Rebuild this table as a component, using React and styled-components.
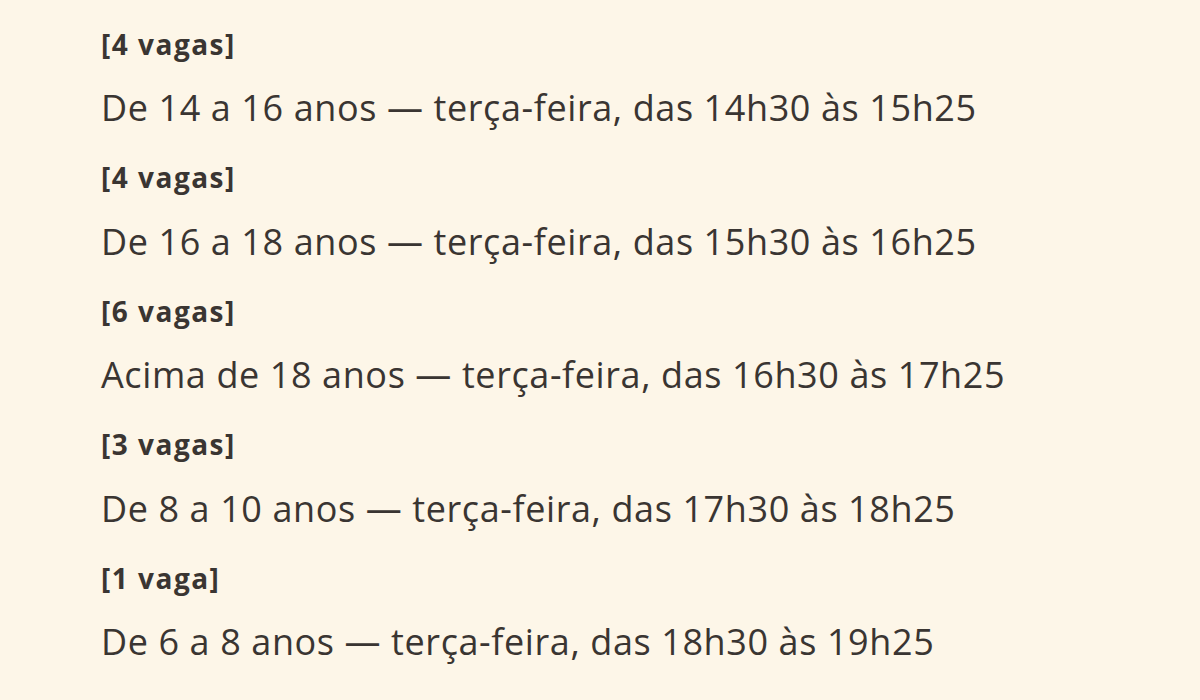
import React from 'react';
import styled, { createGlobalStyle } from 'styled-components';

const Global = createGlobalStyle`
	html, body {
		margin: 0;
		padding: 0;
		background: #fdf6e8;
	}
	body {
		font-family: "Open Sans", "Noto Sans", sans-serif;
		color: #3a3532;
	}
`;

const Lista = styled.div`
	display: flex;
	flex-direction: column;
	gap: 27px;
	padding: 25.5px 0 0 101px;
	height: 700px;
	box-sizing: border-box;
	overflow: hidden;
`;

const Turma = styled.div`
	display: flex;
	flex-direction: column;
	gap: 22.5px;
`;

const Vagas = styled.p`
	margin: 0;
	font-size: 28px;
	line-height: 36px;
	font-weight: 700;
	letter-spacing: 1.5px;
`;

const Horario = styled.p`
	margin: 0;
	font-size: 36px;
	line-height: 48px;
	font-weight: 400;
	letter-spacing: 0.6px;
	white-space: nowrap;
`;

const turmas = [
	{vagas: '[4 vagas]', texto: 'De 14 a 16 anos — terça-feira, das 14h30 às 15h25'},
	{vagas: '[4 vagas]', texto: 'De 16 a 18 anos — terça-feira, das 15h30 às 16h25'},
	{vagas: '[6 vagas]', texto: 'Acima de 18 anos — terça-feira, das 16h30 às 17h25'},
	{vagas: '[3 vagas]', texto: 'De 8 a 10 anos — terça-feira, das 17h30 às 18h25'},
	{vagas: '[1 vaga]', texto: 'De 6 a 8 anos — terça-feira, das 18h30 às 19h25'},
	{vagas: '[5 vagas]', texto: 'De 10 a 12 anos — terça-feira, das 19h30 às 20h25'},
];

function App() {
	return (
		<>
			<Global />
			<Lista>
				{turmas.map((t, i) => (
					<Turma key={i}>
						<Vagas>{t.vagas}</Vagas>
						<Horario>{t.texto}</Horario>
					</Turma>
				))}
			</Lista>
		</>
	);
}

export default App;
